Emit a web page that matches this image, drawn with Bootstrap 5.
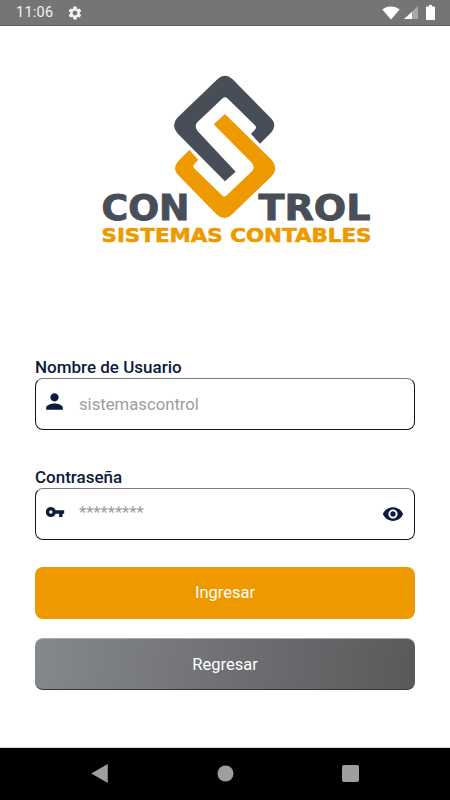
<!DOCTYPE html>
<html lang="es">
<head>
<meta charset="utf-8">
<title>Control Sistemas Contables</title>
<link href="https://cdn.jsdelivr.net/npm/bootstrap@5.3.0/dist/css/bootstrap.min.css" rel="stylesheet">
<style>
html, body { height: 100%; }
body { font-family: Roboto, "Liberation Sans", sans-serif; background: #fff; overflow: hidden; }
.phone { width: 450px; height: 800px; }
.status-strip { height: 26px; background: #757575; border-bottom: 1px solid #5c5c5c; color: #f2f2f2; font-size: 14.5px; padding: 0 15px 0 16px; }
.status-strip svg { display: block; }
.clock { letter-spacing: .25px; width: 50.5px; }
.logo-wrap { padding-top: 39px; height: 332px; }
.logo-svg { display: block; margin-left: 90px; }
.logo-big { font-family: "DejaVu Sans", "Liberation Sans", sans-serif; font-weight: 700; font-size: 36px; fill: #474e57; stroke: #474e57; stroke-width: .9px; }
.logo-small { font-family: "DejaVu Sans", "Liberation Sans", sans-serif; font-weight: 700; font-size: 19.500px; fill: #ef9900; stroke: #ef9900; stroke-width: .6px; }
.form-area { padding: 0 35px; }
.field-label { display: block; margin: 0; font-size: 17px; line-height: 19px; height: 20px; font-weight: 500; color: #0c1a3b; }
.field-box { height: 52px; border: 1px solid #14141c; border-top-color: #7c7c82; border-radius: 8px; background: #fff; }
.field-box .form-control { height: 50px; border: 0; background: transparent; padding: 0; font-size: 16.700px; color: #9b9da0; box-shadow: none; border-radius: 0; }
.field-box .pw { padding-bottom: 3px; }
.slot { width: 43px; flex: none; }
.slot-person { padding-right: 7px; margin-top: -5px; }
.slot-key { padding-right: 5px; margin-top: -5px; }
.slot svg { display: block; fill: #0c1a3b; }
.eye-slot { width: 42px; flex: none; }
.eye-slot svg { display: block; fill: #0c1a3b; }
.gap-field { height: 38px; }
.btn-app { display: block; width: 100%; height: 52px; border-radius: 8px; color: #fff; font-size: 16.500px; border: 0; padding: 1px 0 0; }
.btn-orange { background: #ef9900; margin-top: 27px; }
.btn-grey { background: linear-gradient(100deg, #85888c 0%, #59595b 100%); margin-top: 19px; border-top: 1px solid #a9a9ac; border-bottom: 1px solid #38383a; padding-top: 2px; }
.btn-app:hover, .btn-app:active { color: #fff; }
.nav-strip { height: 53px; background: #000; border-top: 1px solid #d6d6d6; gap: 108px; padding: 0 0 1px 91px; }
.nav-strip svg { display: block; fill: #9e9e9e; }
.spacer-main { flex: 1 1 auto; }
</style>
</head>
<body>
<div class="phone d-flex flex-column">
  <div class="status-strip d-flex align-items-center">
    <span class="clock">11:06</span>
    <svg width="16" height="16" viewBox="0 0 24 24" fill="#f2f2f2"><path d="M19.14 12.94c.04-.3.06-.61.06-.94 0-.32-.02-.64-.07-.94l2.03-1.58c.18-.14.23-.41.12-.61l-1.92-3.32c-.12-.22-.37-.29-.59-.22l-2.39.96c-.5-.38-1.03-.7-1.62-.94l-.36-2.54c-.04-.24-.24-.41-.48-.41h-3.84c-.24 0-.43.17-.47.41l-.36 2.54c-.59.24-1.13.57-1.62.94l-2.39-.96c-.22-.08-.47 0-.59.22L2.74 8.87c-.12.21-.08.47.12.61l2.03 1.58c-.05.3-.09.63-.09.94s.02.64.07.94l-2.03 1.58c-.18.14-.23.41-.12.61l1.92 3.32c.12.22.37.29.59.22l2.39-.96c.5.38 1.03.7 1.62.94l.36 2.54c.05.24.24.41.48.41h3.84c.24 0 .44-.17.47-.41l.36-2.54c.59-.24 1.13-.56 1.62-.94l2.39.96c.22.08.47 0 .59-.22l1.92-3.32c.12-.22.07-.47-.12-.61l-2.01-1.58zM12 15.6c-1.98 0-3.6-1.62-3.6-3.6s1.62-3.6 3.6-3.6 3.6 1.62 3.6 3.6-1.62 3.6-3.6 3.6z"/></svg>
    <div class="flex-grow-1"></div>
    <svg width="18" height="14" viewBox="0 0 18 14"><path d="M9 13.5 .3 3.4C2.6 1.500 5.700.5 9 .5s6.400 1 8.700 2.900z" fill="#fff"/></svg>
    <svg class="ms-1" width="14" height="13" viewBox="0 0 14 13"><path d="M14 0V13H0z" fill="#a8a8a8"/><path d="M8 6V13H0z" fill="#fff"/></svg>
    <svg style="margin-left:8px" width="9" height="15" viewBox="0 0 9 15"><path d="M3 0h3v1.500h2a1 1 0 0 1 1 1V14a1 1 0 0 1-1 1H1a1 1 0 0 1-1-1V2.500a1 1 0 0 1 1-1h2z" fill="#fff"/></svg>
  </div>

  <div class="logo-wrap">
    <svg class="logo-svg" width="290" height="190" viewBox="0 0 870 570">
      <path fill="#474e57" d="M383 42Q405 22 427 42L543 160Q563 180 543 203L510 236 483 207 494 195Q502 187 494 180L412 100Q405 93 398 100L322 172Q312 182 322 197L437 320 405 349 262 205Q242 180 262 158Z"/>
      <path fill="#ef9900" d="M425 449Q403 469 381 449L265 331Q245 311 265 288L298 255 325 284 314 296Q306 304 314 311L396 391Q403 398 410 391L486 319Q496 309 486 294L371 178 405 147 546 286Q566 311 546 333Z"/>
      <text class="logo-big" x="11.500" y="155" textLength="88" lengthAdjust="spacingAndGlyphs" transform="scale(3)">CON</text>
      <text class="logo-big" x="168.500" y="155" textLength="112" lengthAdjust="spacingAndGlyphs" transform="scale(3)">TROL</text>
      <text class="logo-small" x="11.500" y="176.500" textLength="270" lengthAdjust="spacingAndGlyphs" transform="scale(3)">SISTEMAS CONTABLES</text>
    </svg>
  </div>

  <form class="form-area">
    <label class="field-label" for="user">Nombre de Usuario</label>
    <div class="field-box d-flex align-items-center">
      <div class="slot slot-person d-flex justify-content-center"><svg width="25" height="25" viewBox="0 0 24 24"><path d="M12 12c2.210 0 4-1.790 4-4s-1.790-4-4-4-4 1.790-4 4 1.790 4 4 4zm0 2c-2.670 0-8 1.340-8 4v2h16v-2c0-2.660-5.330-4-8-4z"/></svg></div>
      <input id="user" class="form-control" type="text" value="sistemascontrol">
    </div>
    <div class="gap-field"></div>
    <label class="field-label" for="pass">Contraseña</label>
    <div class="field-box d-flex align-items-center">
      <div class="slot slot-key d-flex justify-content-center"><svg width="20" height="20" viewBox="0 0 24 24"><path d="M12.650 10C11.830 7.670 9.610 6 7 6c-3.310 0-6 2.690-6 6s2.690 6 6 6c2.610 0 4.830-1.670 5.650-4H17v4h4v-4h2v-4H12.650zM7 14c-1.100 0-2-.9-2-2s.9-2 2-2 2 .9 2 2-.9 2-2 2z"/></svg></div>
      <input id="pass" class="form-control pw" type="text" value="*********">
      <div class="eye-slot d-flex justify-content-center"><svg width="22" height="22" viewBox="0 0 24 24"><path d="M12 4.500C7 4.500 2.730 7.610 1 12c1.730 4.390 6 7.500 11 7.500s9.270-3.110 11-7.500c-1.730-4.390-6-7.500-11-7.500zM12 17c-2.760 0-5-2.240-5-5s2.240-5 5-5 5 2.240 5 5-2.240 5-5 5zm0-8c-1.660 0-3 1.340-3 3s1.340 3 3 3 3-1.340 3-3-1.340-3-3-3z"/></svg></div>
    </div>
    <button class="btn btn-app btn-orange" type="button">Ingresar</button>
    <button class="btn btn-app btn-grey" type="button">Regresar</button>
  </form>

  <div class="spacer-main"></div>

  <div class="nav-strip d-flex align-items-center">
    <svg width="17.500" height="19" viewBox="0 0 17 19"><path d="M16.500 0V19L0 9.500z"/></svg>
    <svg width="17" height="17" viewBox="0 0 17 17"><circle cx="8.500" cy="8.500" r="8"/></svg>
    <svg width="17" height="17" viewBox="0 0 17 17"><rect width="17" height="17" rx="2"/></svg>
  </div>
</div>
<script src="https://cdn.jsdelivr.net/npm/bootstrap@5.3.0/dist/js/bootstrap.bundle.min.js"></script>
</body>
</html>
